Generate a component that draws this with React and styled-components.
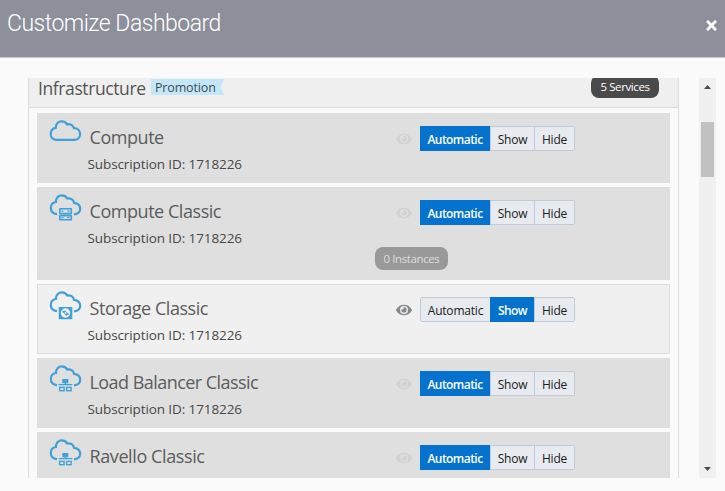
import React from 'react';
import styled, { createGlobalStyle, css } from 'styled-components';
import { FaEye, FaTimes } from 'react-icons/fa';

const GlobalStyle = createGlobalStyle`
  * { box-sizing: border-box; }
  body { margin: 0; background: #fafafa; overflow: hidden; }
`;

const Dialog = styled.div`
  width: 725px;
  height: 491px;
  background: #fafafa;
  color: #4a4a4a;
  font-family: 'Open Sans', 'Noto Sans', sans-serif;
  overflow: hidden;
`;

const TitleBar = styled.header`
  display: flex;
  justify-content: space-between;
  height: 58px;
  padding: 10px 6px 0 7px;
  background: #8d8f9b;
  border-bottom: 1px solid #c5c8d3;
  color: #fff;
`;

const Title = styled.h1`
  margin: 0;
  font: 300 23px/28px Roboto, sans-serif;
  letter-spacing: -0.5px;
  white-space: nowrap;
`;

const CloseButton = styled.button`
  display: flex;
  width: 15px;
  height: 15px;
  margin-top: 8px;
  padding: 0;
  border: 0;
  background: none;
  color: #fff;
  font-size: 15px;
`;

const Body = styled.main`
  display: flex;
  justify-content: space-between;
  height: 400px;
  margin: 20px 9px 0 28px;
`;

const ScrollArea = styled.div`
  width: 651px;
  height: 400px;
  overflow: hidden;
`;

const Group = styled.section`
  border: solid #d9dde1;
  border-width: 0 1px;
`;

const GroupHeader = styled.div`
  display: flex;
  height: 30px;
  padding: 0 19px 0 9px;
  background: #efefef;
  border-bottom: 1px solid #d9dde1;
`;

const GroupName = styled.h2`
  width: 113px;
  margin: 0;
  font-size: 17.5px;
  font-weight: 400;
  line-height: 20px;
  letter-spacing: -0.4px;
  color: #555;
  white-space: nowrap;
`;

const Tag = styled.span`
  width: 73px;
  height: 16px;
  margin-top: 1px;
  padding-left: 4px;
  background: #c3e7f8;
  clip-path: polygon(0 0, 100% 0, 95.5% 50%, 100% 100%, 0 100%);
  color: #3f4c53;
  font-size: 12.5px;
  line-height: 18px;
  letter-spacing: -0.15px;
`;

const Pill = styled.span`
  display: flex;
  align-items: center;
  justify-content: center;
  width: ${(p) => p.$width}px;
  height: 23px;
  border-radius: 8px;
  background: ${(p) => (p.$muted ? '#999' : '#4a4a4a')};
  color: ${(p) => (p.$muted ? '#dedede' : '#fff')};
  font-size: 11.5px;
  letter-spacing: -0.4px;
  white-space: nowrap;
`;

const ServicesPill = styled(Pill)`
  margin: -3px 0 0 auto;
`;

const CardList = styled.div`
  display: flex;
  flex-direction: column;
  gap: 4px;
  padding: 5px 8px 0;
`;

const Card = styled.article`
  display: flex;
  flex-direction: column;
  height: ${(p) => (p.$tall ? 93 : 70)}px;
  background: ${(p) => (p.$active ? '#f0f0f0' : '#dfdfdf')};
  border: 1px solid ${(p) => (p.$active ? '#d9dde1' : '#dcdddd')};
`;

const CardRow = styled.div`
  display: flex;
  height: 59px;
  padding: 5px 0 0 11px;
`;

const Info = styled.div`
  width: 315px;
  padding: 5px 0 0 5.5px;
`;

const ServiceName = styled.h3`
  margin: 0;
  padding-left: 2px;
  font-size: 18px;
  font-weight: 400;
  line-height: 26px;
  letter-spacing: ${(p) => p.$spacing}px;
  color: #5c5c5c;
  white-space: nowrap;
`;

const Subscription = styled.p`
  margin: 0;
  padding-top: 2px;
  font-size: 13.5px;
  line-height: 24px;
  letter-spacing: -0.1px;
  color: #484848;
  white-space: nowrap;
`;

const Eye = styled(FaEye)`
  flex: none;
  width: 16px;
  height: 16px;
  margin: 12px 8px 0 -1px;
  color: ${(p) => (p.$on ? '#848b91' : '#d1d2d3')};
`;

const Toggle = styled.div`
  display: flex;
  height: 25px;
  margin-top: 7px;
  border: 1px solid #bfcbd7;
  border-radius: 2px;
`;

const Option = styled.button`
  width: ${(p) => p.$width}px;
  height: 23px;
  padding: 2px 0 0;
  border: 0;
  background: #e7ebef;
  color: #202020;
  font: 400 12px/21px 'Open Sans', 'Noto Sans', sans-serif;
  letter-spacing: -0.2px;
  white-space: nowrap;

  & + & { border-left: 1px solid #bfcbd7; }

  ${(p) => p.$selected && css`
    height: 25px;
    margin-top: -1px;
    margin-left: ${p.$first ? -1 : 0}px;
    width: ${p.$width + (p.$first ? 1 : 0)}px;
    background: #0572ce;
    color: #fff;
    font-weight: 600;
    letter-spacing: -0.55px;
    && { border-color: #0572ce; }
  `}
`;

const Instances = styled.div`
  padding-left: 337px;
`;

const ScrollBar = styled.div`
  display: flex;
  flex-direction: column;
  align-items: center;
  width: 17px;
  height: 400px;
  background: #f0f0f0;
`;

const Arrow = styled.svg`
  display: block;
  width: 7px;
  height: 4px;
  margin: ${(p) => (p.$down ? 'auto 0 7px' : '7px 0 0')};
  fill: #4c4c4c;
`;

const Thumb = styled.div`
  width: 13px;
  height: 55px;
  margin-top: 33px;
  background: #c1c1c1;
`;

const CloudSvg = styled.svg`
  flex: none;
  width: 33px;
  height: 31px;
  fill: none;
  stroke: #3fa1da;
  stroke-width: 2.2;
  stroke-linecap: butt;
`;

const OPEN_CLOUD =
  'M8 21.2C4.2 20.7 1.8 18.2 1.8 15C1.8 11.9 3.9 9.5 6.9 9C6.8 5 9.4 2.3 12.8 2.3C15.2 2.3 17.3 3.5 18.2 5.5C21.4 4.8 24.5 6.6 25 9.8C28.7 10.3 31.2 12.5 31.2 15.7C31.2 18.7 28.8 21 25 21.3';

function CloudIcon({ kind }) {
  if (kind === 'cloud') {
    return (
      <CloudSvg viewBox="0 0 33 31">
        <path d="M7.8 20.8C4 20.8 1.7 18.2 1.7 15C1.7 11.8 3.8 9.4 6.8 8.9C6.8 4.9 9.3 2.3 12.7 2.3C15.1 2.3 17.1 3.4 18.1 5.4C21.1 4.7 24.4 6.2 24.9 9.1C28.6 9.1 31.1 11.5 31.1 15C31.1 18.5 28.6 20.8 25.1 20.8Z" />
      </CloudSvg>
    );
  }
  return (
    <CloudSvg viewBox="0 0 33 31">
      <path d={OPEN_CLOUD} />
      {kind === 'server' && (
        <g strokeWidth="1.6">
          <rect x="10.8" y="15.8" width="11.5" height="4.8" rx=".4" />
          <rect x="10.8" y="22.6" width="11.5" height="4.2" rx=".4" />
          <path d="M12.5 18.2h2M18.3 18.2h2.2M12.5 24.7h2M18.3 24.7h2.2" strokeWidth="1.2" />
        </g>
      )}
      {kind === 'storage' && (
        <g stroke="none">
          <rect x="9.7" y="17" width="13.6" height="12.2" fill="#3fa1da" />
          <circle cx="16.5" cy="23" r="4.7" fill="#f0f0f0" />
          <path d="M13 21.6l2.8-1.2 4.2 3.9-2.8 1.4z" fill="#3fa1da" />
          <circle cx="16.5" cy="23" r=".9" fill="#f0f0f0" />
        </g>
      )}
      {kind === 'network' && (
        <g strokeWidth="1.4">
          <rect x="13.3" y="15" width="6" height="4.2" fill="#3fa1da" stroke="none" />
          <path d="M16.4 19v2M9.6 20.6h13.7" />
          <rect x="10.6" y="23.4" width="4.5" height="3.3" />
          <rect x="17.6" y="23.4" width="4.5" height="3.3" />
        </g>
      )}
    </CloudSvg>
  );
}

const OPTIONS = [
  { name: 'Automatic', width: 69 },
  { name: 'Show', width: 44 },
  { name: 'Hide', width: 40 },
];

const SUBSCRIPTION = 'Subscription ID: 1718226';

const SERVICES = [
  { name: 'Compute', icon: 'cloud', mode: 'Automatic', spacing: -0.45, subscription: SUBSCRIPTION },
  { name: 'Compute Classic', icon: 'server', mode: 'Automatic', spacing: -0.45, subscription: SUBSCRIPTION, instances: '0 Instances' },
  { name: 'Storage Classic', icon: 'storage', mode: 'Show', spacing: -0.45, subscription: SUBSCRIPTION },
  { name: 'Load Balancer Classic', icon: 'network', mode: 'Automatic', spacing: -0.55, subscription: SUBSCRIPTION },
  { name: 'Ravello Classic', icon: 'network', mode: 'Automatic', spacing: -0.4 },
];

function ServiceCard({ name, icon, mode, spacing, subscription, instances }) {
  const active = mode === 'Show';
  return (
    <Card $active={active} $tall={Boolean(instances)}>
      <CardRow>
        <CloudIcon kind={icon} />
        <Info>
          <ServiceName $spacing={spacing}>{name}</ServiceName>
          {subscription && <Subscription>{subscription}</Subscription>}
        </Info>
        <Eye $on={active} />
        <Toggle>
          {OPTIONS.map((option, i) => (
            <Option key={option.name} $width={option.width} $first={i === 0} $selected={option.name === mode}>
              {option.name}
            </Option>
          ))}
        </Toggle>
      </CardRow>
      {instances && (
        <Instances>
          <Pill $muted $width={73}>{instances}</Pill>
        </Instances>
      )}
    </Card>
  );
}

export default function App() {
  return (
    <Dialog>
      <GlobalStyle />
      <TitleBar>
        <Title>Customize Dashboard</Title>
        <CloseButton aria-label="Close"><FaTimes /></CloseButton>
      </TitleBar>
      <Body>
        <ScrollArea>
          <Group>
            <GroupHeader>
              <GroupName>Infrastructure</GroupName>
              <Tag>Promotion</Tag>
              <ServicesPill $width={68}>5 Services</ServicesPill>
            </GroupHeader>
            <CardList>
              {SERVICES.map((service) => <ServiceCard key={service.name} {...service} />)}
            </CardList>
          </Group>
        </ScrollArea>
        <ScrollBar>
          <Arrow viewBox="0 0 7 4"><path d="M0 4L3.5 0L7 4Z" /></Arrow>
          <Thumb />
          <Arrow $down viewBox="0 0 7 4"><path d="M0 0L3.5 4L7 0Z" /></Arrow>
        </ScrollBar>
      </Body>
    </Dialog>
  );
}
